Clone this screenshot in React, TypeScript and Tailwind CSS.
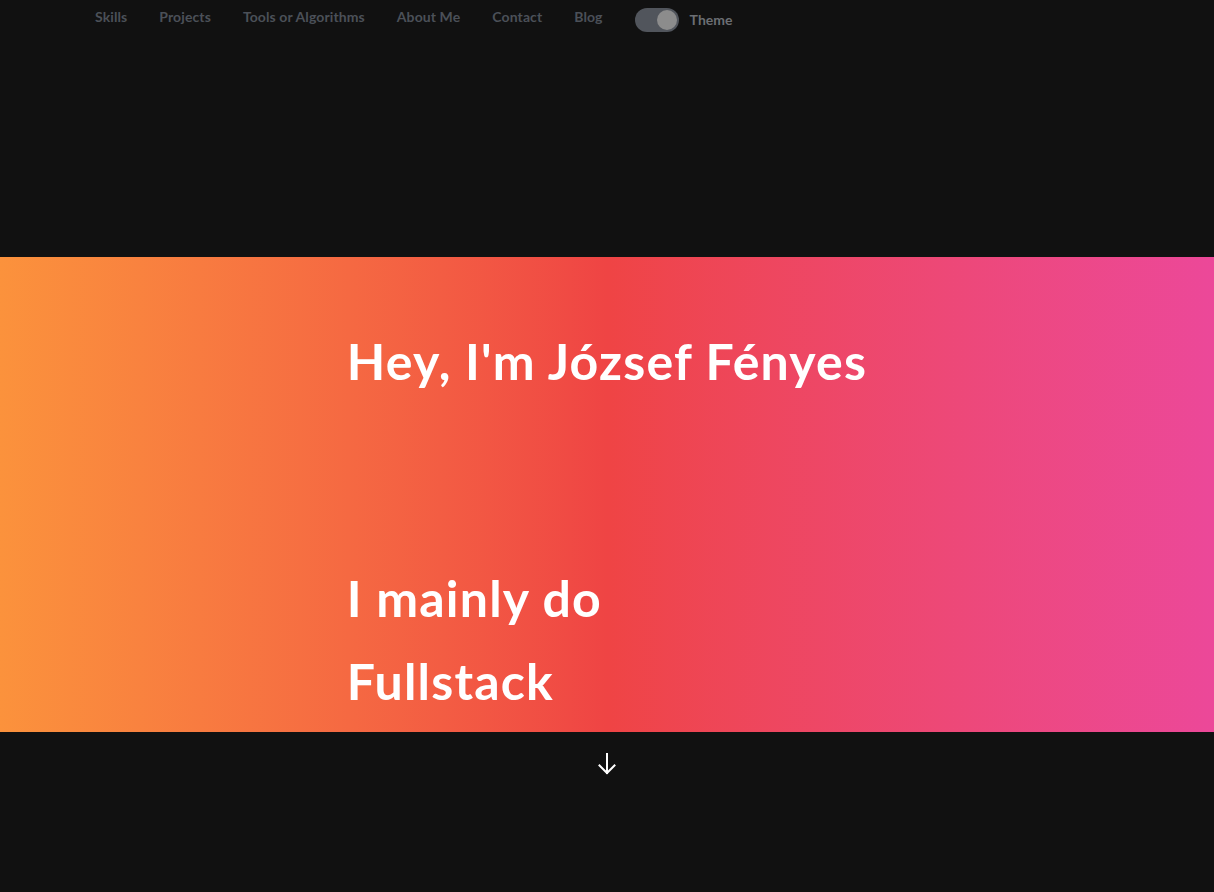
const links = ['Skills', 'Projects', 'Tools or Algorithms', 'About Me', 'Contact', 'Blog'];

export default function App() {
  return (
    <div className="min-h-[892px] bg-[#111111] font-['Lato',sans-serif]">
      {/* Top nav */}
      <nav className="flex h-10 items-center gap-8 pl-[95px]">
        {links.map((l) => (
          <a key={l} href="#" className="-mt-[6px] text-sm font-bold tracking-[0.1px] text-[#4b5058]">
            {l}
          </a>
        ))}
        <div className="flex items-center gap-[11px]">
          <div className="flex h-6 w-11 items-center justify-end rounded-full bg-[#51555c] px-[2px]">
            <div className="h-5 w-5 rounded-full bg-[#8c8c8c]" />
          </div>
          <span className="text-sm font-bold text-[#6b6e73]">Theme</span>
        </div>
      </nav>

      {/* Hero */}
      <section className="mt-[217px] bg-gradient-to-r from-[#fb923c] via-[#ef4444] to-[#ec4899]">
        <div className="mx-auto w-fit pb-[9px] pt-[63px] text-[50px] font-bold leading-[83px] tracking-[1.2px] text-white">
          <h1>Hey, I'm József Fényes</h1>
          <p className="mt-[154px]">I mainly do</p>
          <p>Fullstack</p>
        </div>
      </section>

      <div className="flex justify-center pt-[20px]">
        <svg width="20" height="24" viewBox="0 0 20 24" fill="none" stroke="white" strokeWidth="2" strokeLinecap="square">
          <path d="M10 2v19" />
          <path d="M2.5 13.5 10 21l7.5-7.5" />
        </svg>
      </div>
    </div>
  );
}
